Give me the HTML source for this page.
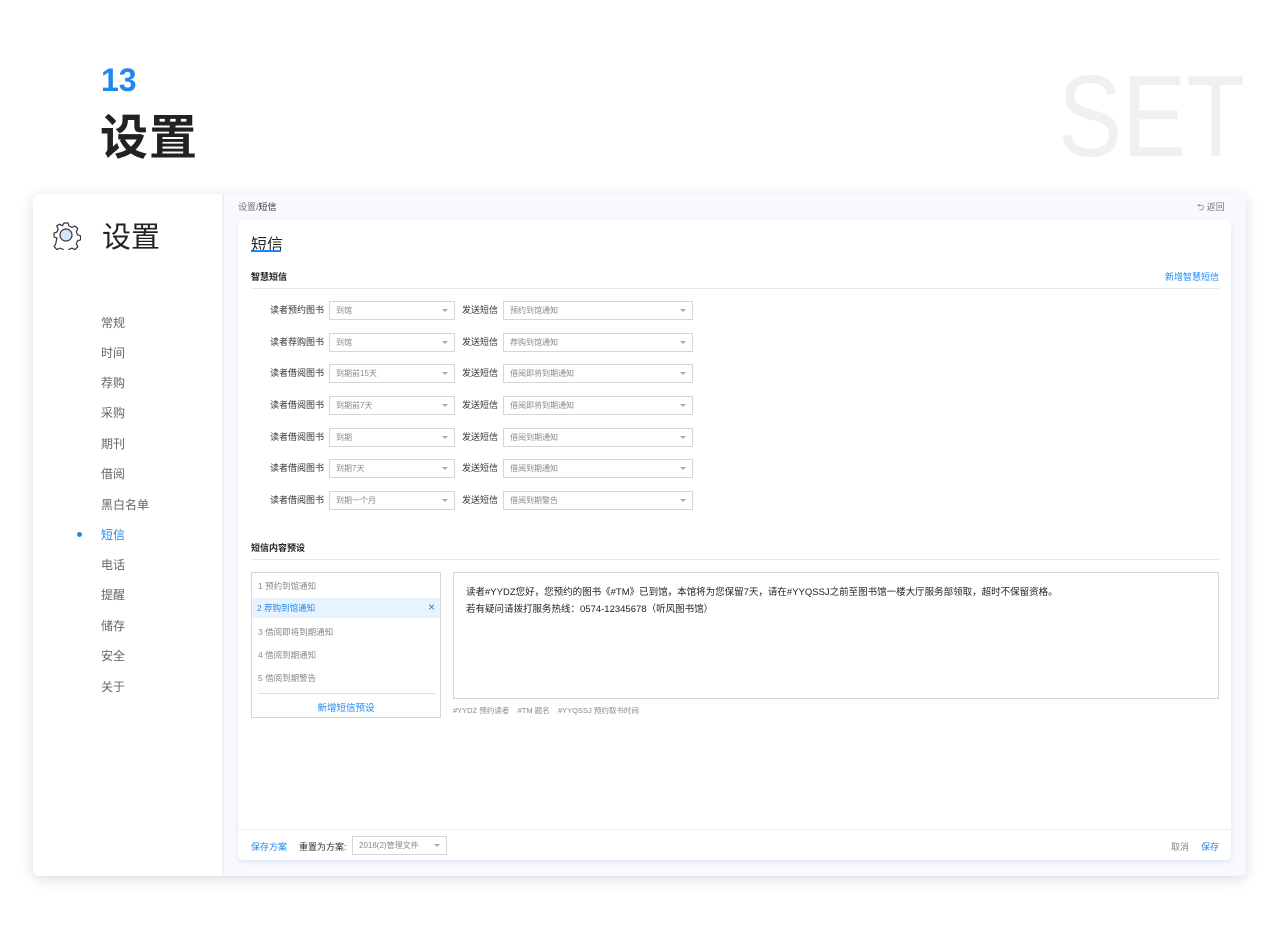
<!DOCTYPE html><html><head><meta charset="utf-8"><style>
*{margin:0;padding:0;box-sizing:border-box}
body{width:1280px;height:943px;background:#fff;font-family:"Liberation Sans","Noto Sans CJK SC",sans-serif;position:relative;overflow:hidden;color:#333}
.a{position:absolute}
.sel{position:absolute;height:19px;border:1px solid #d6d6d6;background:#fff;font-size:8px;color:#888;line-height:17px;padding-left:6px}
.sel:after{content:"";position:absolute;right:6px;top:7px;border:3px solid transparent;border-top:3px solid #aaa}
.lab{position:absolute;font-size:9px;color:#333;line-height:19px}
.nav{position:absolute;left:101px;font-size:12px;color:#666}
</style></head><body>
<div class="a" style="left:101px;top:62px;font-size:32px;font-weight:bold;color:#1e88f0">13</div>
<div class="a" style="left:100px;top:98px;font-size:48px;font-weight:bold;color:#222;letter-spacing:1px">设置</div>
<div class="a" style="left:1058px;top:58px;font-size:116px;color:#f0f0f0;line-height:116px;transform:scaleX(0.83);transform-origin:0 0">SET</div>
<div class="a" style="left:33px;top:194px;width:1213px;height:682px;background:#fff;border-radius:6px;box-shadow:0 3px 14px rgba(0,0,0,.14)"></div>
<div class="a" style="left:224px;top:194px;width:1022px;height:682px;background:#f7f9fc;border-radius:0 6px 6px 0"></div>
<div class="a" style="left:222px;top:194px;width:2px;height:682px;background:#eef0f3"></div>
<svg class="a" style="left:51px;top:220px" width="30" height="30" viewBox="0 0 30 30"><circle cx="15" cy="15" r="6" fill="#d3e6fb" stroke="#333" stroke-width="1.2"/><path d="M13 3h4l1 3 3 1.5 3-1.5 2.8 2.8-1.5 3 1.2 3 3 1v4l-3 1-1.2 3 1.5 3-2.8 2.8-3-1.5-3 1.2-1 3h-4l-1-3-3-1.2-3 1.5-2.8-2.8 1.5-3L6 18l-3-1v-4l3-1 1.2-3-1.5-3L8.5 4.2l3 1.5L13 3z" fill="none" stroke="#333" stroke-width="1.2"/></svg>
<div class="a" style="left:102px;top:214px;font-size:29px;color:#222">设置</div>
<div class="nav" style="top:314px">常规</div><div class="nav" style="top:344px">时间</div><div class="nav" style="top:374px">荐购</div><div class="nav" style="top:404px">采购</div><div class="nav" style="top:435px">期刊</div><div class="nav" style="top:465px">借阅</div><div class="nav" style="top:496px">黑白名单</div>
<div class="a" style="left:77px;top:532px;width:5px;height:5px;border-radius:50%;background:#1e88f0"></div>
<div class="nav" style="top:526px;color:#1e88f0">短信</div><div class="nav" style="top:556px">电话</div><div class="nav" style="top:586px">提醒</div><div class="nav" style="top:617px">储存</div><div class="nav" style="top:647px">安全</div><div class="nav" style="top:678px">关于</div>
<div class="a" style="left:238px;top:200px;font-size:9px;color:#777">设置/<span style="color:#333">短信</span></div>
<div class="a" style="left:1197px;top:200px;font-size:9px;color:#777">⮌ 返回</div>
<div class="a" style="left:238px;top:220px;width:993px;height:640px;background:#fff;border-radius:5px;box-shadow:0 2px 6px rgba(60,110,200,.12)"></div>
<div class="a" style="left:251px;top:231px;font-size:16px;color:#222">短信</div>
<div class="a" style="left:251px;top:250px;width:30px;height:2px;background:#1e88f0"></div>
<div class="a" style="left:251px;top:270px;font-size:9px;font-weight:bold;color:#222">智慧短信</div>
<div class="a" style="left:1165px;top:270px;font-size:9px;color:#1e88f0">新增智慧短信</div>
<div class="a" style="left:251px;top:288px;width:968px;height:1px;background:#e8e8e8"></div>
<div class="lab" style="left:270px;top:301px">读者预约图书</div><div class="sel" style="left:329px;top:301px;width:126px">到馆</div><div class="lab" style="left:462px;top:301px">发送短信</div><div class="sel" style="left:503px;top:301px;width:190px">预约到馆通知</div>
<div class="lab" style="left:270px;top:333px">读者荐购图书</div><div class="sel" style="left:329px;top:333px;width:126px">到馆</div><div class="lab" style="left:462px;top:333px">发送短信</div><div class="sel" style="left:503px;top:333px;width:190px">荐购到馆通知</div>
<div class="lab" style="left:270px;top:364px">读者借阅图书</div><div class="sel" style="left:329px;top:364px;width:126px">到期前15天</div><div class="lab" style="left:462px;top:364px">发送短信</div><div class="sel" style="left:503px;top:364px;width:190px">借阅即将到期通知</div>
<div class="lab" style="left:270px;top:396px">读者借阅图书</div><div class="sel" style="left:329px;top:396px;width:126px">到期前7天</div><div class="lab" style="left:462px;top:396px">发送短信</div><div class="sel" style="left:503px;top:396px;width:190px">借阅即将到期通知</div>
<div class="lab" style="left:270px;top:428px">读者借阅图书</div><div class="sel" style="left:329px;top:428px;width:126px">到期</div><div class="lab" style="left:462px;top:428px">发送短信</div><div class="sel" style="left:503px;top:428px;width:190px">借阅到期通知</div>
<div class="lab" style="left:270px;top:459px">读者借阅图书</div><div class="sel" style="left:329px;top:459px;width:126px">到期7天</div><div class="lab" style="left:462px;top:459px">发送短信</div><div class="sel" style="left:503px;top:459px;width:190px">借阅到期通知</div>
<div class="lab" style="left:270px;top:491px">读者借阅图书</div><div class="sel" style="left:329px;top:491px;width:126px">到期一个月</div><div class="lab" style="left:462px;top:491px">发送短信</div><div class="sel" style="left:503px;top:491px;width:190px">借阅到期警告</div>
<div class="a" style="left:251px;top:541px;font-size:9px;font-weight:bold;color:#222">短信内容预设</div>
<div class="a" style="left:251px;top:559px;width:968px;height:1px;background:#e8e8e8"></div>
<div class="a" style="left:251px;top:572px;width:190px;height:146px;border:1px solid #d6d6d6;font-size:8.5px;color:#888">
<div style="position:absolute;left:6px;top:7px">1 预约到馆通知</div>
<div style="position:absolute;left:0;top:25px;width:188px;height:20px;background:#e9f3fd;color:#1e88f0;padding:4px 0 0 5px">2 荐购到馆通知<span style="position:absolute;right:5px;top:2px;font-size:12px">×</span></div>
<div style="position:absolute;left:6px;top:53px">3 借阅即将到期通知</div>
<div style="position:absolute;left:6px;top:76px">4 借阅到期通知</div>
<div style="position:absolute;left:6px;top:99px">5 借阅到期警告</div>
<div style="position:absolute;left:6px;top:120px;width:177px;height:1px;background:#ddd"></div>
<div style="position:absolute;left:0;width:188px;top:127px;text-align:center;color:#1e88f0;font-size:9.5px">新增短信预设</div></div>
<div class="a" style="left:453px;top:572px;width:766px;height:127px;border:1px solid #d6d6d6;font-size:9.5px;color:#222;padding:11px 12px;line-height:17px">读者#YYDZ您好，您预约的图书《#TM》已到馆，本馆将为您保留7天，请在#YYQSSJ之前至图书馆一楼大厅服务部领取，超时不保留资格。<br>若有疑问请拨打服务热线：0574-12345678（听风图书馆）</div>
<div class="a" style="left:453px;top:705px;font-size:7.5px;color:#888">#YYDZ 预约读者 &nbsp;&nbsp; #TM 题名 &nbsp;&nbsp; #YYQSSJ 预约取书时间</div>
<div class="a" style="left:238px;top:829px;width:993px;height:1px;background:#eee"></div>
<div class="a" style="left:251px;top:840px;font-size:9px;color:#1e88f0">保存方案</div>
<div class="a" style="left:299px;top:840px;font-size:9px;color:#333">重置为方案:</div>
<div class="sel" style="left:352px;top:836px;width:95px;height:19px">2018(2)管理文件</div>
<div class="a" style="left:1171px;top:840px;font-size:9px;color:#888">取消</div>
<div class="a" style="left:1201px;top:840px;font-size:9px;color:#1e88f0">保存</div>
</body></html>
